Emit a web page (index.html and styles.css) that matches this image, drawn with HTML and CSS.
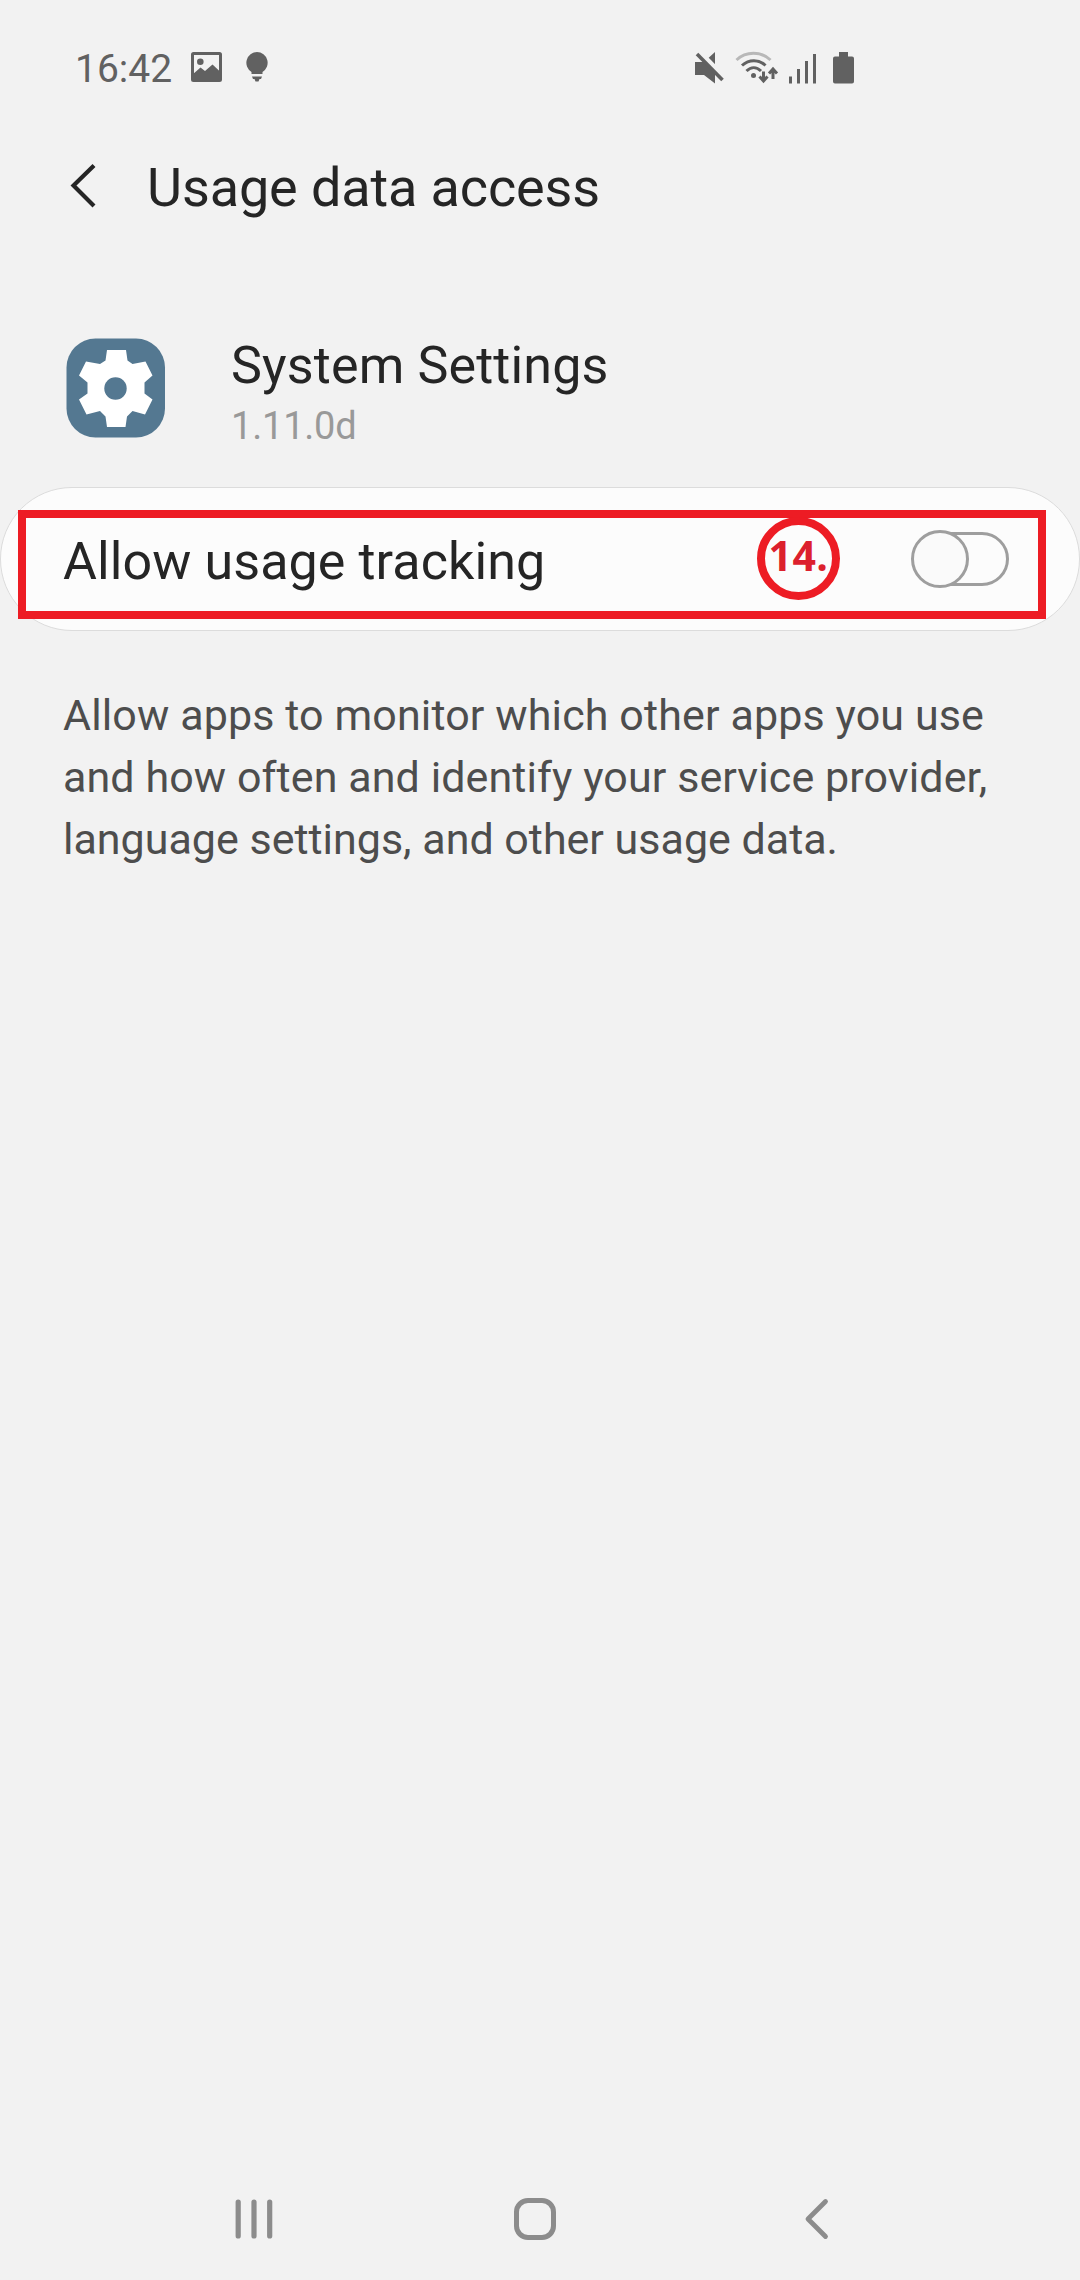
FILE: index.html
```html
<!DOCTYPE html>
<html lang="en">
<head>
<meta charset="utf-8">
<title>Usage data access</title>
<link rel="stylesheet" href="styles.css">
</head>
<body>
<div class="screen">
  <header class="status">
    <span class="clock">16:42</span>
    <svg class="picture" width="31" height="30" viewBox="0 0 31 30"><rect x="1.5" y="1.5" width="28" height="27" rx="1" fill="none" stroke="#616161" stroke-width="3"/><circle cx="9.3" cy="9.8" r="3.3"/><path d="M1.5 22.500 9.500 15.500 14 19 21.500 12.500 29.500 20V28.500H1.500Z"/></svg>
    <svg class="bulb" width="22" height="30" viewBox="0 0 22 30"><path d="M11 0a10.800 10.800 0 0 1 5.500 20v2h-11v-2A10.800 10.800 0 0 1 11 0Z"/><path d="M6 24.500h10l-1 2.500h-1.500l-1 2.500h-3l-1-2.500H7Z"/></svg>
    <svg class="system" width="164" height="36" viewBox="0 0 164 36">
      <path d="M0 11h9L20 1V32.500L9 24H0Z"/><path d="M2 -1 31 28.500" stroke="#f2f2f2" stroke-width="6"/><path d="M2 3 27.500 29" stroke="#616161" stroke-width="3.600"/>
      <g fill="none" stroke="#616161" stroke-width="3"><path d="M41.500 9C51 0 66 0 75.500 9" stroke="#b8b8b8"/><path d="M47 14.500C54 8 64 8 70.500 14.500"/><path d="M51.500 20C56 15.500 61.500 15.500 66 20"/><path d="M68.500 20.500v9M64.500 25.500l4 4.500 4-4.500M78 28v-9M74 22.500l4-4.500 4 4.500"/></g>
      <circle cx="58.500" cy="24.500" r="2.500"/>
      <path d="M94 25.500h3v7h-3ZM102 18h3v14.500h-3ZM110 10h3v22.500h-3ZM118 3h3v29.500h-3Z"/>
      <path d="M144 1h9v4.500h4q2 0 2 2v23q0 2-2 2h-17q-2 0-2-2v-23q0-2 2-2h4Z"/>
    </svg>
  </header>
  <div class="titlebar">
    <svg width="28" height="46" viewBox="0 0 28 46" fill="none" stroke="#252525" stroke-width="4.200"><path d="M25 2.500 4.500 22.500 25 43"/></svg>
    <h1>Usage data access</h1>
  </div>
  <section class="app">
    <svg width="100" height="100" viewBox="0 0 100 100"><rect x=".5" y=".5" width="98.500" height="99" rx="29" fill="#547891"/><path fill="#fff" d="M41 12H60L61.500 22.500 66.500 26 79.500 23.500 86.500 37.500 78.500 44.500V55.500L86.500 61.500 79 76.500 66.500 73 61 78.500 59.500 89H41L39.500 78.500 34 73 20.500 76.500 13 61.500 21.500 55.500V44.500L13 37.500 20 23.500 34 26 39.500 22.500Z"/><circle cx="49.500" cy="50.500" r="11.200" fill="#547891"/></svg>
    <div class="meta"><h2>System Settings</h2><p>1.11.0d</p></div>
  </section>
  <section class="card">
    <span class="label">Allow usage tracking</span>
    <span class="toggle"><span class="thumb"></span></span>
    <div class="highlight"></div>
    <div class="step"><span>14.</span></div>
  </section>
  <p class="description"><span class="line-wide">Allow apps to monitor which other apps you use</span><br><span class="line-mid">and how often and identify your service provider,</span><br>language settings, and other usage data.</p>
  <nav class="navbar">
    <svg width="38" height="42" viewBox="0 0 38 42" stroke-width="5.200"><path d="M3.200 4V38M19 4V38M34.700 4V38"/></svg>
    <svg class="home" width="42" height="42" viewBox="0 0 42 42" stroke-width="5"><rect x="2.500" y="2.500" width="37" height="37" rx="11.500"/></svg>
    <svg width="25" height="42" viewBox="0 0 25 42" stroke-width="4.800"><path d="M21.500 3.500 4 21 21.500 38.500"/></svg>
  </nav>
</div>
</body>
</html>
```
FILE: styles.css
```css
* { box-sizing: border-box; margin: 0; padding: 0; }
body { background: #f2f2f2; font-family: Roboto, sans-serif; color: #252525; }
svg { display: block; flex: none; overflow: visible; }
h1, h2 { font-weight: 400; white-space: nowrap; }
.screen { width: 1080px; height: 2280px; display: flex; flex-direction: column; overflow: hidden; }
.status { height: 136px; padding: 51px 0 0 75px; display: flex; align-items: flex-start; color: #616161; fill: #616161; }
.clock { width: 116px; font-size: 39px; line-height: 36px; }
.picture { margin-top: 1px; }
.bulb { margin: 1px 0 0 24px; }
.system { margin-left: 427px; }
.titlebar { height: 104px; padding-left: 69px; display: flex; align-items: center; gap: 50px; }
.titlebar svg { margin-bottom: 5px; }
.titlebar h1 { font-size: 54px; line-height: 64px; letter-spacing: -0.12px; }
.app { height: 247px; padding: 98px 0 0 66px; display: flex; gap: 64px; }
.meta h2 { font-size: 52px; line-height: 60px; margin: -2px 0 0 1px; letter-spacing: 0.15px; }
.meta p { font-size: 38px; line-height: 44px; margin: 8px 0 0 1px; color: #999; letter-spacing: -0.2px; }
.card { position: relative; height: 144px; border: 1px solid #dcdcdc; border-radius: 72px; background: #fcfcfc; padding: 0 70px 0 62px; display: flex; align-items: center; justify-content: space-between; }
.label { font-size: 52px; line-height: 60px; margin-top: 6px; letter-spacing: 0.1px; }
.toggle { position: relative; width: 97px; height: 54px; border: 3px solid #9e9e9e; border-radius: 27px; }
.thumb { position: absolute; left: -4px; top: -5px; width: 58px; height: 58px; border: 3px solid #9e9e9e; border-radius: 50%; background: #fafafa; }
.highlight { position: absolute; left: 17px; top: 22px; width: 1028px; height: 109px; border: 8px solid #ed1c24; }
.step { position: absolute; left: 756px; top: 29px; width: 83px; height: 83px; border: 8px solid #ed1c24; border-radius: 50%; color: #dc202d; font: 700 41px/61px "Open Sans", sans-serif; letter-spacing: 0.5px; display: flex; justify-content: center; }
.description { padding: 53px 0 0 63px; font-size: 43px; line-height: 62px; color: #4d4d4d; white-space: nowrap; }
.line-wide { letter-spacing: 0.12px; }
.line-mid { letter-spacing: 0.09px; }
.navbar { margin-top: auto; height: 122px; padding: 0 251px 0 235px; display: flex; align-items: center; justify-content: space-between; fill: none; stroke: #8c8c8c; stroke-linecap: round; stroke-linejoin: round; }
.home { margin-right: 7px; }
```
